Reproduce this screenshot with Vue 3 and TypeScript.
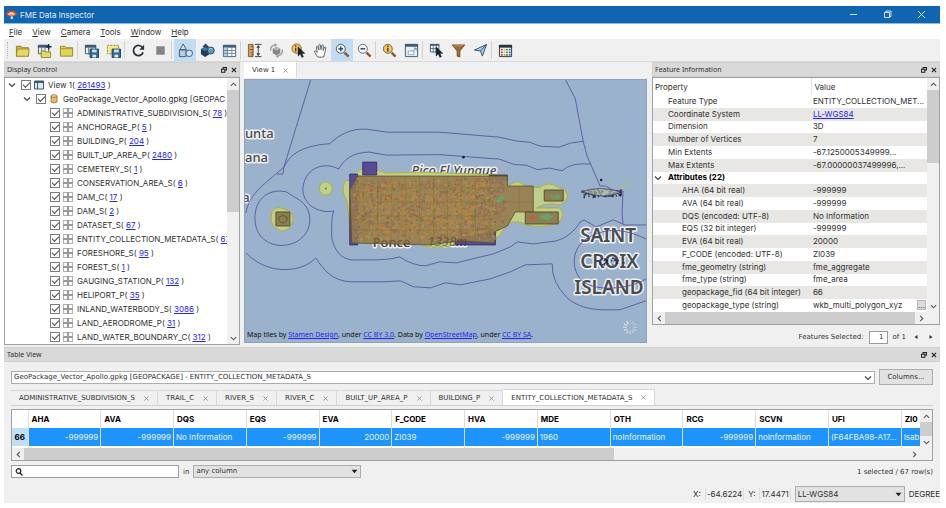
<script setup lang="ts">
import { ref } from 'vue'

interface Tool { name: string; icon?: string; active?: boolean; sep?: boolean }
interface TreeRow { name: string; count?: string; level: number; kind: 'view' | 'db' | 'type' }
interface Prop { name: string; value: string; level: number; link?: boolean; head?: boolean; more?: boolean }

const folder = '<path d="M1.5 3.5h5l1 1.500h7v9h-13z" fill="#c9b83a" stroke="#8d7f22"/><path d="M1.500 14l1-7.500h12.500l-.8 7.500z" fill="#e5da62" stroke="#948729" stroke-width=".8"/>'
const windowGlyph = '<path d="M1.500 2.500h11v9h-11z" fill="#e8eef3" stroke="#3f5b6e"/><path d="M1 2h12v3H1z" fill="#3f5b6e"/><path d="M5 5v7M8.500 5v7" stroke="#3f5b6e" stroke-width=".8"/>'
const disk = '<path d="M6.500 6.500h9v9h-9z" fill="#2f6c96" stroke="#1c3f5a"/><path d="M8.500 7h5v3h-5z" fill="#cfe0ec"/><path d="M9 12.500h4v3H9z" fill="#dce7ee"/>'
const cursor = '<path d="M7.500 4v10l2.400-2.200 1.600 3.600 1.800-.8-1.600-3.500h3.200z" fill="#17252f" stroke="#17252f" stroke-width=".4"/>'
const handle = '<path d="M10.200 10.200l4.300 4.300" stroke="#8a5a2c" stroke-width="2.600"/>'

const icons: Record<string, string> = {
  open: folder,
  add: windowGlyph + '<path d="M4.500 8.500h3l1 1h6v6h-10z" fill="#e5da62" stroke="#948729"/><path d="M12.500 1v6M9.500 4h6" stroke="#1d2830" stroke-width="1.400"/>',
  plain: '<path d="M1.500 3.500h5l1 1.500h7v9h-13z" fill="#e0d355" stroke="#948729"/><path d="M2 6h12" stroke="#a99b32"/>',
  save: windowGlyph + disk,
  saveSel: '<path d="M1.500 2.500h12v9h-12z" fill="#f2e98d" stroke="#8d8535" stroke-dasharray="2 1.200"/>' + disk,
  refresh: '<path d="M12.600 5.200A5.400 5.400 0 1 0 13 10" fill="none" stroke="#253139" stroke-width="1.800"/><path d="M14 1.800v5.400H8.800z" fill="#253139"/>',
  stop: '<path d="M3.500 3.500h9v9h-9z" fill="#858585"/>',
  shapes: '<path d="M5.500 1l3.500 6H2z" fill="#cfe2f3" stroke="#3c5a72"/><path d="M1.500 7.500h7v7h-7z" fill="#b4d1ea" stroke="#3c5a72"/><circle cx="12" cy="11" r="3.500" fill="#cfe2f3" stroke="#3c5a72"/>',
  solids: '<path d="M6 .5l4 4-4 1.500-3.500-2z" fill="#274a63"/><path d="M1 6.500L5.500 4.500 10 6.500v5.500L5.500 15 1 12z" fill="#1e3f57"/><path d="M1 6.500L5.500 8.500 10 6.500 5.500 4.500z" fill="#4b7998"/><circle cx="11.500" cy="8" r="3.700" fill="#5f97bd" stroke="#28485e"/><path d="M10 6.500q1.500-1.500 3 0" stroke="#cbe0ee" fill="none"/>',
  grid: '<path d="M1.500 2.500h13v12h-13z" fill="#fff" stroke="#41617a"/><path d="M1 2h14v3H1z" fill="#41617a"/><path d="M2 5h4v9H2z" fill="#b6d3ec"/><path d="M1 8h14M1 11h14M6 5v9M10.500 5v9" stroke="#5d7e96" stroke-width=".9"/>',
  ruler: '<path d="M1.500 1.500h5v13h-5z" fill="#dca667" stroke="#80572b"/><path d="M4 4h2.500M3 7h3.500M4 10h2.500M4 12.500h2.500" stroke="#5f4020" stroke-width=".8"/><path d="M8.500 1.500h7M8.500 14.500h7M12 3v10" stroke="#37444d"/><path d="M12 2l-2 3h4zM12 14l-2-3h4z" fill="#37444d"/>',
  orbit: '<path d="M4 6l4-2 4 2v5l-4 2-4-2z" fill="#858585"/><path d="M4 6l4 2 4-2-4-2z" fill="#b6b6b6"/><path d="M2 8Q1 3 7 2M14 7q1.500 5-5 7" fill="none" stroke="#9c9c9c" stroke-width="1.500"/><path d="M6 0l3 2-3 2zM10 16l-3-2 3-2z" fill="#9c9c9c"/>',
  identify: '<circle cx="6" cy="6" r="5" fill="#f0c466" stroke="#8b6121"/><path d="M5 5v4" stroke="#493716" stroke-width="1.400"/><circle cx="5" cy="3.200" r=".9" fill="#493716"/>' + cursor,
  hand: '<path d="M5 15L1.800 9.800q-.6-1.500.9-1.300L4.500 10 3.500 4.200q.5-1.300 1.500-.2L6.300 7.500 6.200 2q.8-1.300 1.600 0L8.500 7l1-4.700q.9-1 1.500.2L10.800 8l1.500-3.500q1.200-.8 1.400.5L12.500 11l-1.200 4z" fill="#fff" stroke="#46515a" stroke-width=".9"/>',
  zoomIn: handle + '<circle cx="6.200" cy="6.200" r="4.800" fill="#eef5fa" stroke="#44545f"/><path d="M3.700 6.200h5M6.200 3.700v5" stroke="#27343d" stroke-width="1.400"/>',
  zoomOut: handle + '<circle cx="6.200" cy="6.200" r="4.800" fill="#f8f8f8" stroke="#59646c"/><path d="M3.700 6.200h5" stroke="#27343d" stroke-width="1.400"/>',
  zoomInfo: handle + '<circle cx="6.200" cy="6.200" r="4.800" fill="#f0c466" stroke="#7b6235"/><path d="M6.200 5.200v4" stroke="#493716" stroke-width="1.400"/><circle cx="6.200" cy="3.500" r=".9" fill="#493716"/>',
  extents: '<path d="M1.500 1.500h13v13h-13z" fill="#e9f1f7" stroke="#3e5c72"/><path d="M1 1h14v3H1z" fill="#3e5c72"/><path d="M4.500 8.500h6v4h-6z" fill="#fff" stroke="#7795aa" stroke-width=".8"/><path d="M9.500 9L13 5.500M10.500 5.500H13V8" fill="none" stroke="#6d8ca2"/>',
  selectTable: '<path d="M1.500 1.500h9v8h-9z" fill="#fff" stroke="#41617a"/><path d="M1 1h10v2H1z" fill="#41617a"/><path d="M1 6h9M4.500 2v8M7.500 2v8" stroke="#41617a" stroke-width=".9"/>' + cursor,
  filter: '<path d="M1.200 2h13.600L9.500 8.500V15l-3-1V8.500z" fill="#9a6a38" stroke="#68451f" stroke-width=".8"/><path d="M3 3h10" stroke="#c4935b"/>',
  arrow: '<path d="M14.500 1.500L10 14 8 8.500 1.500 7.500z" fill="#a9cdec" stroke="#2f506b"/><path d="M14.500 1.500L8 8.500" stroke="#2f506b"/>',
  palette: '<path d="M1.500 2.500h13v12h-13z" fill="#fff" stroke="#27343d"/><path d="M1 2h14v3H1z" fill="#27343d"/><path d="M3 6h2v2H3zM3 9h2v2H3z" fill="#d22f2f"/><path d="M6 6h2v2H6zM6 9h2v2H6z" fill="#e8b52d"/><path d="M8.500 6h2v2h-2zM8.500 9h2v2h-2z" fill="#35a046"/><path d="M11.500 6h2v2h-2zM11.500 9h2v2h-2z" fill="#2e62c4"/><path d="M3 12h2v1.500H3z" fill="#8c2020"/><path d="M6 12h2v1.500H6z" fill="#b07a1c"/><path d="M8.500 12h2v1.500h-2z" fill="#1d6b2b"/><path d="M11.500 12h2v1.500h-2z" fill="#1d3f86"/>',
}

const tools: Tool[] = [
  { name: 'Open Dataset', icon: 'open' }, { name: 'Add Dataset', icon: 'add' }, { name: 'Open Folder', icon: 'plain' }, { name: 's1', sep: true },
  { name: 'Save Data', icon: 'save' }, { name: 'Save Selected', icon: 'saveSel' }, { name: 's2', sep: true },
  { name: 'Refresh', icon: 'refresh' }, { name: 'Stop', icon: 'stop' }, { name: 's3', sep: true },
  { name: '2D View', icon: 'shapes', active: true }, { name: '3D View', icon: 'solids' }, { name: 'Table View', icon: 'grid' }, { name: 's4', sep: true },
  { name: 'Measure', icon: 'ruler' }, { name: 'Orbit', icon: 'orbit' }, { name: 'Select', icon: 'identify' }, { name: 'Pan', icon: 'hand' },
  { name: 'Zoom In', icon: 'zoomIn', active: true }, { name: 'Zoom Out', icon: 'zoomOut' }, { name: 's5', sep: true },
  { name: 'Zoom to Selected', icon: 'zoomInfo' }, { name: 'Zoom to Extents', icon: 'extents' }, { name: 's6', sep: true },
  { name: 'Select in Table', icon: 'selectTable' }, { name: 'Filter', icon: 'filter' }, { name: 'Mark Location', icon: 'arrow' }, { name: 's7', sep: true },
  { name: 'Background Maps', icon: 'palette' },
]

const menus = ['File', 'View', 'Camera', 'Tools', 'Window', 'Help']

const types: [string, string][] = [
  ['ADMINISTRATIVE_SUBDIVISION_S', '78'], ['ANCHORAGE_P', '5'], ['BUILDING_P', '204'], ['BUILT_UP_AREA_P', '2480'],
  ['CEMETERY_S', '1'], ['CONSERVATION_AREA_S', '6'], ['DAM_C', '17'], ['DAM_S', '2'], ['DATASET_S', '67'],
  ['ENTITY_COLLECTION_METADATA_S', '67'], ['FORESHORE_S', '95'], ['FOREST_S', '1'], ['GAUGING_STATION_P', '132'],
  ['HELIPORT_P', '35'], ['INLAND_WATERBODY_S', '3086'], ['LAND_AERODROME_P', '31'], ['LAND_WATER_BOUNDARY_C', '312'],
]
const tree: TreeRow[] = [
  { name: 'View 1', count: '261493', level: 0, kind: 'view' },
  { name: 'GeoPackage_Vector_Apollo.gpkg [GEOPAC', level: 1, kind: 'db' },
  ...types.map(([name, count]): TreeRow => ({ name, count, level: 2, kind: 'type' })),
]

const props: Prop[] = [
  { name: 'Feature Type', value: 'ENTITY_COLLECTION_MET...', level: 0 },
  { name: 'Coordinate System', value: 'LL-WGS84', level: 0, link: true },
  { name: 'Dimension', value: '3D', level: 0 },
  { name: 'Number of Vertices', value: '7', level: 0 },
  { name: 'Min Extents', value: '-67.1250005349999...', level: 0 },
  { name: 'Max Extents', value: '-67.00000037499996,...', level: 0 },
  { name: 'Attributes (22)', value: '', level: 0, head: true },
  { name: 'AHA (64 bit real)', value: '-999999', level: 1 },
  { name: 'AVA (64 bit real)', value: '-999999', level: 1 },
  { name: 'DQS (encoded: UTF-8)', value: 'No Information', level: 1 },
  { name: 'EQS (32 bit integer)', value: '-999999', level: 1 },
  { name: 'EVA (64 bit real)', value: '20000', level: 1 },
  { name: 'F_CODE (encoded: UTF-8)', value: 'ZI039', level: 1 },
  { name: 'fme_geometry (string)', value: 'fme_aggregate', level: 1 },
  { name: 'fme_type (string)', value: 'fme_area', level: 1 },
  { name: 'geopackage_fid (64 bit integer)', value: '66', level: 1 },
  { name: 'geopackage_type (string)', value: 'wkb_multi_polygon_xyz', level: 1, more: true },
]

const tabs = ['ADMINISTRATIVE_SUBDIVISION_S', 'TRAIL_C', 'RIVER_S', 'RIVER_C', 'BUILT_UP_AREA_P', 'BUILDING_P', 'ENTITY_COLLECTION_METADATA_S']
const activeTab = ref(tabs.length - 1)

const columns = [
  { name: 'AHA', value: '-999999', num: true }, { name: 'AVA', value: '-999999', num: true }, { name: 'DQS', value: 'No Information' },
  { name: 'EQS', value: '-999999', num: true }, { name: 'EVA', value: '20000', num: true }, { name: 'F_CODE', value: 'ZI039' },
  { name: 'HVA', value: '-999999', num: true }, { name: 'MDE', value: '1960' }, { name: 'OTH', value: 'noInformation' },
  { name: 'RCG', value: '-999999', num: true }, { name: 'SCVN', value: 'noInformation' }, { name: 'UFI', value: '(F64FBA98-A17...' },
  { name: 'ZI0', value: 'Isab' },
]

const query = ref('')
const page = ref('1')

// Deterministic scatter that gives the dense feature layer its texture.
let seed = 7919
const rnd = () => (seed = (seed * 16807) % 2147483647) / 2147483647
function scatter(n: number, x0: number, y0: number, w: number, h: number, max: number): string {
  let d = ''
  for (let i = 0; i < n; i++) {
    const x = (x0 + rnd() * w).toFixed(1)
    const y = (y0 + rnd() * h).toFixed(1)
    const a = (0.6 + rnd() * max).toFixed(1)
    const b = (0.6 + rnd() * max).toFixed(1)
    d += `M${x} ${y}h${a}v${b}h-${a}z`
  }
  return d
}
const speckles = [
  { fill: '#ab8f55', d: scatter(420, 352, 178, 144, 61, 3) },
  { fill: '#96655a', d: scatter(360, 352, 178, 144, 58, 3) },
  { fill: '#8d7834', d: scatter(240, 352, 178, 144, 61, 1.6) },
  { fill: '#cf8433', d: scatter(420, 354, 180, 138, 54, 2) },
  { fill: '#70583f', d: scatter(140, 352, 178, 144, 61, 1.2) },
  { fill: '#96655a', d: scatter(60, 495, 180, 10, 42, 2) },
]
const islets = scatter(70, 582, 189, 41, 7, 2)
const croix = scatter(26, 600, 256, 26, 9, 2)
const spokes = Array.from({ length: 12 }, (_, i) => ({ a: i * 30, o: 0.25 + i * 0.055 }))
</script>

<template>
  <main class="app">
    <header class="title">
      <svg class="logo" viewBox="0 0 12 12" aria-hidden="true">
        <path d="M0 6Q.5 1.500 6 1.500T12 6L9.500 8h-7z" fill="#c8482f" />
        <path d="M1.500 5.500Q6 1 10.500 5.500L8.500 7h-5z" fill="#f1b27a" />
        <path d="M4 4h1.500v1.500H4zM6.500 4H8v1.500H6.500z" fill="#fff" />
        <path d="M5 8h2.500v3H5z" fill="#ded6ce" />
      </svg>
      <h1>FME Data Inspector</h1>
      <div class="winbtns">
        <button aria-label="Minimize"><svg viewBox="0 0 9 9"><path d="M1 4.500h7" /></svg></button>
        <button aria-label="Restore"><svg viewBox="0 0 9 9"><path d="M1.500 2.500h5v5h-5zM3 2.500V1h5v5.500H6.500" /></svg></button>
        <button aria-label="Close"><svg viewBox="0 0 9 9"><path d="M1 1l7 7M8 1L1 8" /></svg></button>
      </div>
    </header>

    <nav class="menu">
      <button v-for="m in menus" :key="m"><u>{{ m[0] }}</u>{{ m.slice(1) }}</button>
    </nav>

    <div class="toolbar" role="toolbar">
      <i class="grip"></i>
      <template v-for="t in tools" :key="t.name">
        <i v-if="t.sep" class="sep"></i>
        <button v-else :class="{ on: t.active }" :aria-label="t.name">
          <svg viewBox="0 0 16 16" fill="none" v-html="icons[t.icon ?? '']"></svg>
        </button>
      </template>
    </div>

    <div class="docks">
      <section class="dock left">
        <div class="dockhead">
          <h2>Display Control</h2>
          <button aria-label="Float"><svg viewBox="0 0 7 7"><path d="M2.500 2V.5h4v3H5M.5 2.500h4v3.500h-4z" /></svg></button>
          <button aria-label="Close panel"><svg viewBox="0 0 7 7"><path d="M1 1l5 5M6 1L1 6" /></svg></button>
        </div>
        <div class="box treebox">
          <ul class="tree">
            <li v-for="r in tree" :key="r.name" :class="'l' + r.level">
              <svg v-if="r.level < 2" class="chev" viewBox="0 0 8 8"><path d="M1 2.500l3 3 3-3" /></svg>
              <label>
                <input type="checkbox" checked />
                <svg v-if="r.kind === 'view'" class="ico" viewBox="0 0 10 10"><path d="M.5 1h9v8h-9z" fill="#dceaf5" stroke="#3f5b6e" /><path d="M0 1h10v2H0z" fill="#3f5b6e" /><path d="M3.500 3v6" stroke="#3f5b6e" /></svg>
                <svg v-else-if="r.kind === 'db'" class="ico" viewBox="0 0 10 10"><path d="M2 2v6q3 2 6 0V2" fill="#edbb62" stroke="#8d6b34" stroke-width=".8" /><ellipse cx="5" cy="2" rx="3" ry="1.300" fill="#f8dba2" stroke="#8d6b34" stroke-width=".8" /></svg>
                <svg v-else class="ico" viewBox="0 0 10 10"><path d="M0 0h10v10H0z" fill="#fafafa" /><path d="M0 .5h10M0 9.500h10M.5 0v10M9.500 0v10" stroke="#b4b4b4" /><path d="M0 5h10M5 0v10" stroke="#9a9a9a" stroke-width="2" /></svg>
                <span>{{ r.name }}</span>
              </label>
              <span v-if="r.count">( <a href="#">{{ r.count }}</a> )</span>
            </li>
          </ul>
          <div class="vbar">
            <button aria-label="Scroll up"><svg viewBox="0 0 8 8"><path d="M1 5.500l3-3 3 3" /></svg></button>
            <i class="thumb treethumb"></i>
            <button aria-label="Scroll down"><svg viewBox="0 0 8 8"><path d="M1 2.500l3 3 3-3" /></svg></button>
          </div>
        </div>
      </section>

      <section class="center">
        <div class="viewtabs">
          <button class="viewtab">View 1 <svg class="x" viewBox="0 0 6 6"><path d="M.5.5l5 5M5.500.5l-5 5" /></svg></button>
        </div>
        <div class="map">
          <svg class="canvas" viewBox="245 79 402 264" preserveAspectRatio="xMidYMid slice" role="img" aria-label="Map">
            <g class="halo place">
              <text x="245" y="138">unta</text>
              <text x="245" y="162">ana</text>
              <text x="246" y="202" text-anchor="middle">a</text>
              <text x="412" y="175" class="peak">Pico El Yunque</text>
              <text x="373" y="247">Ponce</text>
              <text x="428" y="246" class="peak">1338m</text>
            </g>
            <g class="halo big">
              <text x="581" y="242">SAINT</text>
              <text x="581" y="268">CROIX</text>
              <text x="575" y="294">ISLAND</text>
            </g>
            <g class="limits">
              <path d="M311 79L284 167L283 174H277" />
              <path d="M246 213C248 196 264 184 277 173L284 167C289 158 296 146 330 143.500C340 134 352 128 367 129L388 132H440L500 137L518 141L530 142L541 146L560 147Q570 142 584 141" />
              <path d="M334 211C318 214 303 204 303 189C304 170 322 160 339 169C344 160 352 152 370 152L387 155L440 154.500L500 159L515 164.500L527 165L538 169.500L550 168L563 170.500Q572 162 592 164" />
              <path d="M334 211C331 220 332 228 332 238C336 256 346 261 358 260L377 260L391 259L400 257Q414 266 426 266L440 262L457 263L477 258L494 254L511 247L518 242L534 244L557 241Q572 237 581 222L585 220L597 227L614 220L624 224" />
              <path d="M255 220C254 196 272 188 287 192C296 199 310 202 310 220C309 252 257 256 255 220" />
              <path d="M246 253C268 276 302 273 316 258C324 270 332 281 351 282H384L401 281L414 287L431 288L446 283L461 285L491 279L511 272L526 265L553 264Q552 282 568 298C584 312 604 310 621 310L647 301" />
              <path d="M566 79L576 98L584 141L588 156L601 186L607 186L613 190L624 191L623 214L624 225H647" />
              <path d="M647 239C620 226 604 230 590 237C572 247 571 269 583 281C595 292 630 290 647 279" />
            </g>
            <g class="layer">
              <path class="green" d="M346 180L350 181Q352 175 362 169L377 170L387 173L420 172L508 175V186Q520 178 524 185L540 188Q550 180 558 187Q572 190 567 200Q562 207 554 204Q545 203 537 208H560Q567 214 560 222Q545 229 526 225Q518 219 508 224L500 236Q490 242 470 242Q430 252 420 243H354Q348 238 350 225L347 200Q340 190 346 180z" />
              <path d="M363 162h14v13h-14zM350 174h8v71h-8zM490 232h6v13h-40v-6zM490 175h18v5h-18z" fill="#5a4a94" stroke="#2e2a5e" stroke-width=".8" />
              <path d="M358 176H508V186H534V212H516L508 226L495 232V243L460 241L430 245L352 243L350 190z" fill="#957a50" fill-opacity=".9" stroke="#5d5227" stroke-width=".8" />
              <path v-for="(s, i) in speckles" :key="i" :d="s.d" :fill="s.fill" fill-opacity=".75" />
              <path class="parcels" d="M351 188H508M351 202H534M351 216H508M351 230H500M364 176V244M378 176V244M392 176V244M406 176V244M420 176V244M434 176V244M448 176V244M462 176V244M476 176V244M490 176V238M520 186V212" />
              <path d="M545 190h19v11h-19zM526 212h33v12h-33z" fill="#8b8055" stroke="#5d4d27" />
              <path d="M551 193l3 4 4-3 4 3-3 2-7-1zM540 216l8-2 6 2-4 4-8-1zM498 198l5-3 3 2-4 5-5 1z" fill="#6ba06a" />
              <path d="M529 217l5-2 3 3-5 3z" fill="#c0603c" />
              <circle class="green" cx="326" cy="188.500" r="6.500" /><circle cx="326" cy="188.500" r="1" fill="#4c8c3a" />
              <path class="green" d="M272 212Q276 205 284 209Q294 210 293 221Q290 231 282 231Q273 229 271 220z" />
              <path d="M276 212h14v14h-14z" fill="#8b8055" stroke="#5d4d27" />
              <path d="M279 217q4-3 8 0q1 5-4 6q-5-1-4-6" fill="none" stroke="#63552e" />
              <path :d="islets" fill="#2c2d50" /><path d="M582 192Q600 185 622 192Q610 198 596 195z" fill="#b9c6a4" stroke="#2c2d50" stroke-width=".7" fill-opacity=".6" />
              <path d="M621 186l11-3-3 3-7 2z" fill="#a9bb95" />
              <path :d="croix" fill="#282453" />
              <circle cx="464" cy="157" r="1.300" fill="#1d1b55" /><circle cx="602" cy="180" r="1.300" fill="#1d1b55" />
            </g>
            <g class="over place" aria-hidden="true"><text x="373" y="247">Ponce</text><text x="428" y="246" class="peak">1338m</text></g>
            <g stroke="#eef2f5" stroke-width="1.200">
              <path v-for="s in spokes" :key="s.a" d="M631 324v-3.500" :transform="`rotate(${s.a} 631 327.500)`" :stroke-opacity="s.o" />
            </g>
          </svg>
          <p class="credit">Map tiles by <a href="#">Stamen Design</a>, under <a href="#">CC BY 3.0</a>. Data by <a href="#">OpenStreetMap</a>, under <a href="#">CC BY SA</a>.</p>
        </div>
      </section>

      <section class="dock right">
        <div class="dockhead">
          <h2>Feature Information</h2>
          <button aria-label="Float"><svg viewBox="0 0 7 7"><path d="M2.500 2V.5h4v3H5M.5 2.500h4v3.500h-4z" /></svg></button>
          <button aria-label="Close panel"><svg viewBox="0 0 7 7"><path d="M1 1l5 5M6 1L1 6" /></svg></button>
        </div>
        <div class="box infobox">
          <div class="inforow">
            <table class="info">
              <thead><tr><th>Property</th><th>Value</th></tr></thead>
              <tbody>
                <tr v-for="p in props" :key="p.name">
                  <td :class="['p' + p.level, { head: p.head }]"><svg v-if="p.head" class="chev" viewBox="0 0 8 8"><path d="M1 2.500l3 3 3-3" /></svg>{{ p.name }}</td>
                  <td><a v-if="p.link" href="#">{{ p.value }}</a><template v-else>{{ p.value }}</template><button v-if="p.more" class="more" aria-label="Show full value">...</button></td>
                </tr>
              </tbody>
            </table>
            <div class="vbar">
              <button aria-label="Scroll up"><svg viewBox="0 0 8 8"><path d="M1 5.500l3-3 3 3" /></svg></button>
              <i class="thumb infothumb"></i>
              <button aria-label="Scroll down"><svg viewBox="0 0 8 8"><path d="M1 2.500l3 3 3-3" /></svg></button>
            </div>
          </div>
          <div class="hbar">
            <button aria-label="Scroll left"><svg viewBox="0 0 8 8"><path d="M5.500 1l-3 3 3 3" /></svg></button>
            <i class="thumb full"></i>
            <button class="inset" aria-label="Scroll right"><svg viewBox="0 0 8 8"><path d="M2.500 1l3 3-3 3" /></svg></button>
          </div>
        </div>
        <div class="pager">
          <label for="feature">Features Selected:</label>
          <input id="feature" v-model="page" type="text" />
          <span>of 1</span>
          <button aria-label="Previous feature"><svg viewBox="0 0 6 6"><path d="M4.500 1L1.500 3l3 2z" /></svg></button>
          <button aria-label="Next feature"><svg viewBox="0 0 6 6"><path d="M1.500 1l3 2-3 2z" /></svg></button>
        </div>
      </section>
    </div>

    <section class="tableview">
      <div class="dockhead">
        <h2>Table View</h2>
        <button aria-label="Float"><svg viewBox="0 0 7 7"><path d="M2.500 2V.5h4v3H5M.5 2.500h4v3.500h-4z" /></svg></button>
        <button aria-label="Close panel"><svg viewBox="0 0 7 7"><path d="M1 1l5 5M6 1L1 6" /></svg></button>
      </div>
      <div class="tvbody">
        <div class="source">
          <div class="combo light">
            <select aria-label="Dataset"><option>GeoPackage_Vector_Apollo.gpkg [GEOPACKAGE] - ENTITY_COLLECTION_METADATA_S</option></select>
            <svg class="chev" viewBox="0 0 8 8"><path d="M1 2.500l3 3 3-3" /></svg>
          </div>
          <button class="push">Columns...</button>
        </div>
        <div class="tabs" role="tablist">
          <button v-for="(t, i) in tabs" :key="t" role="tab" :aria-selected="i === activeTab" :class="{ cur: i === activeTab }" @click="activeTab = i">
            {{ t }}<svg class="x" viewBox="0 0 6 6"><path d="M.5.5l5 5M5.500.5l-5 5" /></svg>
          </button>
        </div>
        <div class="box gridbox">
          <div class="gridrow">
            <div class="gridclip">
              <table class="data">
                <thead><tr><th class="num"></th><th v-for="c in columns" :key="c.name">{{ c.name }}</th></tr></thead>
                <tbody>
                  <tr><th class="num">66</th><td v-for="c in columns" :key="c.name" :class="{ r: c.num }">{{ c.value }}</td></tr>
                  <tr class="next"><th></th><td v-for="c in columns" :key="c.name"></td></tr>
                </tbody>
              </table>
            </div>
            <div class="vbar">
              <button aria-label="Scroll up"><svg viewBox="0 0 8 8"><path d="M1 5.500l3-3 3 3" /></svg></button>
              <i class="thumb full"></i>
              <button aria-label="Scroll down"><svg viewBox="0 0 8 8"><path d="M1 2.500l3 3 3-3" /></svg></button>
            </div>
          </div>
          <div class="hbar">
            <button aria-label="Scroll left"><svg viewBox="0 0 8 8"><path d="M5.500 1l-3 3 3 3" /></svg></button>
            <i class="thumb gridthumb"></i>
            <button class="inset" aria-label="Scroll right"><svg viewBox="0 0 8 8"><path d="M2.500 1l3 3-3 3" /></svg></button>
          </div>
        </div>
        <div class="search">
          <div class="field">
            <svg viewBox="0 0 8 8"><circle cx="3.500" cy="3" r="2.300" /><path d="M5 5l2.500 2.500" /></svg>
            <input v-model="query" type="text" aria-label="Search table" />
          </div>
          <label for="col">in</label>
          <div class="combo"><select id="col"><option>any column</option></select><svg class="tri" viewBox="0 0 6 6"><path d="M.5 1.500h5L3 4.500z" /></svg></div>
          <output>1 selected / 67 row(s)</output>
        </div>
      </div>
    </section>

    <footer class="status">
      <span>X:</span><span class="coord">-64.6224</span>
      <span>Y:</span><span class="coord">17.4471</span>
      <div class="combo cs"><select aria-label="Coordinate system"><option>LL-WGS84</option></select><svg class="tri" viewBox="0 0 6 6"><path d="M.5 1.500h5L3 4.500z" /></svg></div>
      <span>DEGREE</span>
    </footer>
  </main>
</template>

<style>
body { background: #fff; }
</style>

<style scoped>
.app, .app * { box-sizing: border-box; }
.app {
  height: 100vh; display: flex; flex-direction: column;
  border: solid #fff; border-width: 6px 6px 5px 4px; background: #f0f0f0;
  font: 8px/12px "Inter", "Noto Sans", sans-serif; color: #303030; overflow: hidden;
}
button, input, select { font: inherit; color: inherit; margin: 0; padding: 0; border: 0; background: none; border-radius: 0; }
h1, h2, p, ul { margin: 0; padding: 0; font: inherit; }
svg { display: block; flex: none; }
a { color: #2424ee; }

.title { height: 18px; flex: none; display: flex; align-items: center; background: #0f65b0; border-bottom: 1px solid #8dbbe0; color: #e4eef8; padding: 0 2px; }
.logo { width: 11px; height: 11px; margin-right: 3px; }
.title h1 { flex: 1; }
.winbtns { display: flex; }
.winbtns button { width: 34px; display: grid; place-items: center; }
.winbtns svg { width: 9px; height: 9px; fill: none; stroke: #e4eef8; stroke-width: .9; }

.menu { height: 15px; flex: none; background: #fff; display: flex; align-items: center; gap: 10px; padding-left: 5px; }

.toolbar { height: 22px; flex: none; display: flex; align-items: center; padding-left: 3px; }
.grip { width: 2px; height: 16px; margin-right: 2px; border-left: 1px dotted #b5b5b5; }
.sep { width: 3px; height: 18px; border-left: 1px solid #d2d2d2; }
.toolbar button { width: 22px; height: 22px; display: grid; place-items: center; }
.toolbar svg { width: 15px; height: 15px; }
.toolbar .on { background: #c1dcf3; }

.docks { flex: 1; min-height: 0; display: flex; gap: 4px; border-top: 1px solid #dadada; }
.dock { display: flex; flex-direction: column; min-height: 0; min-width: 0; }
.left { flex: 0 0 236px; }
.right { flex: 0 0 288px; }
.dockhead { height: 15px; flex: none; display: flex; align-items: center; background: #d9d9d9; border: 1px solid #cfcfcf; padding: 0 0 0 2px; font: 7px/12px "Noto Sans", sans-serif; }
.dockhead h2 { flex: 1; }
.dockhead button { width: 10px; display: grid; place-items: center; }
.dockhead svg { width: 6px; height: 6px; fill: none; stroke: #1c1c1c; stroke-width: 1.2; }
.box { background: #fff; border: 1px solid #9da1a6; }

.treebox { flex: 1; min-height: 0; display: flex; overflow: hidden; }
.tree { flex: 1; min-width: 0; list-style: none; overflow: hidden; }
.tree li { height: 14px; display: flex; align-items: center; white-space: nowrap; }
.tree label { display: flex; align-items: center; }
.l0 { padding-left: 3px; }
.l1 { padding-left: 18px; }
.l2 { padding-left: 45px; }
.chev { width: 8px; height: 8px; fill: none; stroke: #454545; stroke-width: 1.2; }
.tree .chev { margin-right: 5px; }
.tree input { appearance: none; width: 10px; height: 10px; margin-right: 3px; border: 1px solid #7c7c7c; background: #fff; display: grid; place-items: center; }
.tree input:checked::before { content: ""; width: 6px; height: 3px; border: solid #4c4c4c; border-width: 0 0 1px 1px; transform: translateY(-1px) rotate(-45deg); }
.ico { width: 10px; height: 10px; margin-right: 4px; fill: none; }

.vbar { width: 12px; flex: none; background: #f0f0f0; display: flex; flex-direction: column; }
.vbar button, .hbar button { width: 12px; height: 12px; flex: none; display: grid; place-items: center; }
.vbar svg, .hbar svg { width: 7px; height: 7px; fill: none; stroke: #585858; stroke-width: 1.3; }
.thumb { background: #cdcdcd; }
.vbar button:last-child { margin-top: auto; }
.treethumb { height: 46%; }
.infothumb { height: 31%; }
.full { flex: 1; }
.hbar { height: 12px; flex: none; display: flex; background: #f0f0f0; padding-right: 12px; }
.hbar .inset { margin-left: auto; }

.center { flex: 1; min-width: 0; display: flex; flex-direction: column; padding-bottom: 2px; }
.viewtabs { height: 16px; flex: none; display: flex; }
.viewtab { background: #fff; padding: 0 8px; display: flex; align-items: center; gap: 8px; font: 7px/12px "DejaVu Sans", sans-serif; border-right: 1px solid #dcdcdc; }
.x { width: 5px; height: 5px; fill: none; stroke: #909090; stroke-width: 1; }
.map { flex: 1; min-height: 0; margin: 1px 1px 0 0; position: relative; background: #9bb2cc; border: 1px solid #8fa3b8; overflow: hidden; }
.canvas { width: 100%; height: 100%; }
.credit { position: absolute; left: 2px; bottom: 1px; font: 7px/12px "Noto Sans", sans-serif; color: #111; white-space: nowrap; }
.limits { fill: none; stroke: #5a56a0; stroke-width: .9; }
.green { fill: #c1cf8b; stroke: #a9b23c; stroke-width: 1; }
.parcels { fill: none; stroke: #75702a; stroke-width: .5; stroke-opacity: .7; }
.halo { fill: #4a4a4a; stroke: #eef1f3; stroke-width: 3; paint-order: stroke; stroke-linejoin: round; }
.place { font: 500 13px "Noto Sans", sans-serif; }
.peak { font: italic 500 13px "Noto Sans", sans-serif; }
.big { font: 600 19px "Noto Sans", sans-serif; }
.over { fill: #4a3626; fill-opacity: .5; }

.infobox { flex: 1; min-height: 0; display: flex; flex-direction: column; }
.inforow { flex: 1; min-height: 0; display: flex; }
.info { flex: 1; width: 100%; height: 100%; border-collapse: collapse; table-layout: fixed; }
.info th { text-align: left; font-weight: 400; height: 17px; padding: 0 2px; }
.info td { padding: 0 0 0 1px; line-height: 11px; white-space: nowrap; overflow: hidden; position: relative; }
.info th:first-child { width: 58%; }
.info th:last-child { border-left: 1px solid #e2e2e2; }
.info tbody tr:nth-child(even) { background: #e9e7e3; }
.info td.p0 { padding-left: 15px; }
.info td.p1 { padding-left: 29px; }
.info td.head { font-weight: 700; color: #000; }
.info .chev { position: absolute; left: 1px; top: 2px; }
.more { position: absolute; right: 1px; top: 1px; width: 9px; height: 10px; line-height: 7px; background: #dcdcdc; border: 1px solid #b5b5b5; }
.pager { height: 20px; flex: none; display: flex; align-items: center; justify-content: flex-end; gap: 5px; padding: 4px 4px 0 0; font: 7px/12px "DejaVu Sans", sans-serif; }
.pager input { width: 19px; height: 13px; background: #fff; border: 1px solid #9a9a9a; text-align: right; padding-right: 3px; }
.pager button { width: 10px; display: grid; place-items: center; }
.pager svg { width: 6px; height: 6px; fill: #333; }

.tableview { flex: none; margin-top: 2px; display: flex; flex-direction: column; }
.tvbody { display: flex; flex-direction: column; padding: 7px 7px 0; font: 7px/12px "DejaVu Sans", sans-serif; }
.source { display: flex; align-items: center; gap: 4px; }
.combo { position: relative; height: 13px; background: #e2e2e2; border: 1px solid #adadad; }
.combo select { appearance: none; width: 100%; height: 11px; line-height: 11px; padding: 0 12px 0 2px; display: block; }
.combo svg { position: absolute; right: 2px; top: 2px; pointer-events: none; }
.light { flex: 1; background: #fff; }
.tri { width: 7px; height: 7px; fill: #222; }
.push { width: 54px; height: 16px; background: #e2e2e2; border: 1px solid #adadad; }
.tabs { display: flex; align-items: flex-end; margin-top: 4px; height: 17px; border-bottom: 1px solid #d0d0d0; }
.tabs button { height: 15px; display: flex; align-items: center; gap: 9px; padding: 0 8px; border: solid #d9d9d9; border-width: 1px 1px 0 0; }
.tabs .cur { height: 16px; background: #fff; }
.gridbox { margin-top: 3px; display: flex; flex-direction: column; font: 8px/12px "Inter", "Noto Sans", sans-serif; }
.gridrow { display: flex; }
.gridclip { flex: 1; min-width: 0; overflow: hidden; }
.data { width: 106%; border-collapse: collapse; table-layout: fixed; }
.data th, .data td { height: 18px; padding: 0 2px; border-right: 1px solid #dcdcdc; white-space: nowrap; overflow: hidden; }
.data thead th { text-align: left; padding-left: 3px; font-weight: 700; color: #000; }
.data .num { width: 16px; text-align: center; padding: 0; }
.data tbody .num { background: #bfdff5; color: #000; }
.data td { background: #1e93fa; color: #e9f4ff; }
.data .r { text-align: right; }
.data .next th, .data .next td { height: 2px; background: #fff; }
.gridthumb { width: 65%; }
.search { display: flex; align-items: center; gap: 4px; margin-top: 4px; }
.field { width: 168px; height: 13px; display: flex; align-items: center; background: #fff; border: 1px solid #9da1a6; padding: 0 3px; gap: 2px; }
.field svg { width: 8px; height: 8px; fill: none; stroke: #222; stroke-width: 1.2; }
.field input { flex: 1; min-width: 0; height: 11px; outline: 0; }
.search .combo { width: 168px; }
.search output { margin-left: auto; }

.status { height: 25px; flex: none; display: flex; align-items: center; justify-content: flex-end; gap: 4px; padding-top: 6px; }
.coord { border: solid #dedede; border-width: 0 1px; padding: 0 1px; }
.cs { width: 110px; height: 16px; }
.cs select { height: 14px; line-height: 14px; }
.cs svg { top: 4px; }
</style>
